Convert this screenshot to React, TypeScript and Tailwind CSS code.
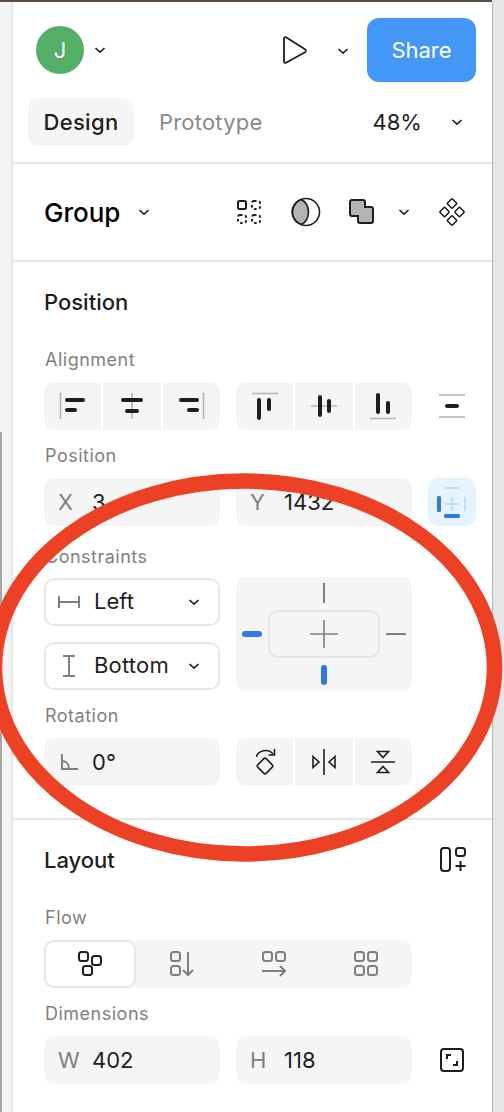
import type { ReactNode } from "react";

function Chevron({ className = "" }: { className?: string }) {
  return (
    <svg width="12" height="12" viewBox="0 0 12 12" fill="none" className={`shrink-0 ${className}`}>
      <path d="M1.5 4 6 8.2 10.5 4" stroke="#1e1e1e" strokeWidth="1.6" />
    </svg>
  );
}

function Icon({ children, size = 28 }: { children: ReactNode; size?: number }) {
  return (
    <svg width={size} height={size} viewBox={`0 0 ${size} ${size}`} fill="none" stroke="#1e1e1e" strokeWidth="1.6">
      {children}
    </svg>
  );
}

function Cell({ label, value }: { label: ReactNode; value: string }) {
  return (
    <div className="flex h-12 w-[176px] items-center rounded-[10px] bg-[#f5f5f5]">
      <span className="w-12 pl-[14px] text-[22px] text-[#7f7f7f]">{label}</span>
      <span className="text-[22px] text-[#1e1e1e]">{value}</span>
    </div>
  );
}

function Segments({ items }: { items: ReactNode[] }) {
  return (
    <div className="flex h-12 w-[176px] gap-[2px] overflow-hidden rounded-[10px]">
      {items.map((it, i) => (
        <div key={i} className="flex flex-1 items-center justify-center bg-[#f5f5f5]">
          {it}
        </div>
      ))}
    </div>
  );
}

function Label({ children, className = "" }: { children: ReactNode; className?: string }) {
  return <div className={`ml-[1px] text-[18px] leading-6 tracking-[0.5px] text-[#808080] ${className}`}>{children}</div>;
}

const GRAY = "#b3b3b3";
const BAR = "#1e1e1e";

const alignH = [
  <Icon key="l">
    <path d="M1.5 1v26" stroke={GRAY} />
    <rect x="6" y="6" width="20" height="4" rx="2" fill={BAR} stroke="none" />
    <rect x="6" y="16" width="12" height="4" rx="2" fill={BAR} stroke="none" />
  </Icon>,
  <Icon key="c">
    <path d="M14 1v26" stroke={GRAY} />
    <rect x="3" y="6" width="22" height="4" rx="2" fill={BAR} stroke="none" />
    <rect x="7" y="17" width="14" height="4" rx="2" fill={BAR} stroke="none" />
  </Icon>,
  <Icon key="r">
    <path d="M26.500 1v26" stroke={GRAY} />
    <rect x="2" y="6" width="20" height="4" rx="2" fill={BAR} stroke="none" />
    <rect x="10" y="16" width="12" height="4" rx="2" fill={BAR} stroke="none" />
  </Icon>,
];

const alignV = [
  <Icon key="t">
    <path d="M1 1.500h26" stroke={GRAY} />
    <rect x="6" y="6" width="4" height="22" rx="2" fill={BAR} stroke="none" />
    <rect x="16" y="6" width="4" height="13" rx="2" fill={BAR} stroke="none" />
  </Icon>,
  <Icon key="m">
    <path d="M1 14h26" stroke={GRAY} />
    <rect x="8" y="3" width="4" height="22" rx="2" fill={BAR} stroke="none" />
    <rect x="17" y="7" width="4" height="14" rx="2" fill={BAR} stroke="none" />
  </Icon>,
  <Icon key="b">
    <path d="M1 26.500h26" stroke={GRAY} />
    <rect x="7" y="1" width="4" height="21" rx="2" fill={BAR} stroke="none" />
    <rect x="17" y="9" width="4" height="13" rx="2" fill={BAR} stroke="none" />
  </Icon>,
];

const rotateIcons = [
  <Icon key="rot" size={30}>
    <rect x="9" y="13" width="12" height="12" rx="2" transform="rotate(45 15 19)" />
    <path d="M6.500 10c1-6.500 12-9 16.500-3" />
    <path d="M24.500 2v6h-6" />
  </Icon>,
  <Icon key="fh">
    <path d="M14 1v26" />
    <path d="M3 8.500v11l6-5.500z" />
    <path d="M25 8.500v11l-6-5.500z" />
  </Icon>,
  <Icon key="fv">
    <path d="M2 14h24" />
    <path d="M8.500 3.500h11l-5.500 6z" />
    <path d="M8.500 24.500h11l-5.500-6z" />
  </Icon>,
];

function Tile({ x, y }: { x: number; y: number }) {
  return <rect x={x} y={y} width="9" height="9" rx="2.500" />;
}

function FlowTab({ active, children }: { active?: boolean; children: ReactNode }) {
  return (
    <div
      className={`flex h-12 w-[92px] items-center justify-center rounded-[10px] ${
        active ? "border-2 border-[#e6e6e6] bg-white" : ""
      }`}
    >
      {children}
    </div>
  );
}

export default function App() {
  return (
    <div className="relative h-[1112px] w-[504px] overflow-hidden bg-[#f5f5f5] font-['Inter',sans-serif]">
      <div className="h-[2px] w-[492px] bg-[#5c4c41]" />
      {/* canvas scrollbar sliver on the far left, window shadow on the right */}
      <div className="absolute bottom-0 left-0 top-[432px] w-[2px] bg-[#a8a8a8]" />
      <div className="absolute bottom-0 right-0 top-0 w-[11px] bg-[#e6e6e6]" />

      <div className="ml-[11px] flex h-[1110px] w-[482px] flex-col border-l-2 border-r border-l-[#e6e6e6] border-r-[#b5b5b5] bg-white">
        {/* top bar */}
        <header className="h-[162px] shrink-0 border-b-2 border-[#e6e6e6] bg-white">
          <div className="flex h-[80px] items-start pt-[16px]">
            <div className="ml-[23px] mt-[8px] flex h-12 w-12 items-center justify-center rounded-full bg-[#53ae67] text-[22px] text-white">
              J
            </div>
            <Chevron className="ml-[10px] mt-[26px]" />
            <svg width="26" height="30" viewBox="0 0 26 30" fill="none" className="ml-[176px] mt-[17px]">
              <path
                d="M2 3.500v23c0 1.200 1 1.800 2 1.200l19-10.500c1.200-.7 1.200-2.200 0-2.900L4 2.300c-1-.6-2 0-2 1.200z"
                stroke="#1e1e1e"
                strokeWidth="1.800"
              />
            </svg>
            <Chevron className="ml-[29px] mt-[27px]" />
            <button className="ml-[18px] h-16 w-[109px] rounded-[12px] bg-[#4597f7] text-[22px] text-white">
              Share
            </button>
          </div>
          <div className="mt-[16px] flex h-12 items-center">
            <div className="ml-[15px] flex h-12 w-[106px] items-center justify-center rounded-[10px] bg-[#f5f5f5] text-[22px] font-medium tracking-[0.3px] text-[#1e1e1e]">
              Design
            </div>
            <span className="ml-[25px] text-[22px] tracking-[0.2px] text-[#8a8a8a]">Prototype</span>
            <span className="ml-[110px] text-[22px] text-[#1e1e1e]">48%</span>
            <Chevron className="ml-[29px]" />
          </div>
        </header>

        {/* selection row */}
        <section className="flex h-[98px] shrink-0 items-center border-b-2 border-[#e6e6e6]">
          <span className="ml-[31px] text-[26px] font-medium text-black">Group</span>
          <Chevron className="ml-[18px]" />
          <div className="ml-[85px]">
            <Icon>
              <rect x="3" y="3" width="8" height="8" rx="1.500" strokeWidth="2" />
              <rect x="17" y="3" width="8" height="8" rx="2" strokeDasharray="2.500 2.500" strokeWidth="2" />
              <rect x="3" y="17" width="8" height="8" rx="2" strokeDasharray="2.500 2.500" strokeWidth="2" />
              <rect x="17" y="17" width="8" height="8" rx="2" strokeDasharray="2.500 2.500" strokeWidth="2" />
            </Icon>
          </div>
          <div className="ml-[28px]">
            <svg width="30" height="30" viewBox="0 0 30 30" fill="none" stroke="#1e1e1e" strokeWidth="1.600">
              <path d="M10.500 2.500a13 13 0 0 0 0 25c4.500-2.500 7-7.500 7-12.500s-2.500-10-7-12.500z" fill="#b3b3b3" />
              <circle cx="15" cy="15" r="13.500" />
            </svg>
          </div>
          <div className="ml-[28px]">
            <svg width="26" height="26" viewBox="0 0 26 26" fill="#b3b3b3" stroke="#1e1e1e" strokeWidth="2">
              <path d="M3 1h11c1 0 2 1 2 2v5h6c1 0 2 1 2 2v12c0 1-1 2-2 2H11c-1 0-2-1-2-2v-5H3c-1 0-2-1-2-2V3c0-1 1-2 2-2z" />
            </svg>
          </div>
          <Chevron className="ml-[23px]" />
          <div className="ml-[28px]">
            <Icon>
              <rect x="10.500" y="2" width="7" height="7" rx="1" transform="rotate(45 14 5.500)" />
              <rect x="3" y="10.500" width="7" height="7" rx="1" transform="rotate(45 6.500 14)" />
              <rect x="18" y="10.500" width="7" height="7" rx="1" transform="rotate(45 21.500 14)" />
              <rect x="10.500" y="19" width="7" height="7" rx="1" transform="rotate(45 14 22.500)" />
            </Icon>
          </div>
        </section>

        {/* position */}
        <section className="h-[558px] shrink-0 border-b-2 border-[#e6e6e6] pl-[31px]">
          <h2 className="mt-[28px] text-[22px] font-medium leading-6 text-[#1e1e1e]">Position</h2>
          <Label className="mt-[34px]">Alignment</Label>
          <div className="mt-[10px] flex items-center gap-4">
            <Segments items={alignH} />
            <Segments items={alignV} />
            <div className="ml-[10px]">
              <Icon>
                <path d="M1 3h26M1 25h26" stroke={GRAY} />
                <rect x="7" y="12" width="14" height="4" rx="2" fill={BAR} stroke="none" />
              </Icon>
            </div>
          </div>
          <Label className="mt-[14px]">Position</Label>
          <div className="mt-[10px] flex gap-4">
            <Cell label="X" value="3" />
            <Cell label="Y" value="1432" />
            <div className="flex h-12 w-12 items-center justify-center rounded-[10px] bg-[#e5f3ff]">
              <svg width="32" height="32" viewBox="0 0 32 32" fill="none">
                <path d="M9 2h14M29 11v14M16 11v14M9 18h14" stroke="#bddcfb" strokeWidth="2" />
                <rect x="1" y="10" width="4" height="16" rx="1.500" fill="#3178e0" />
                <rect x="8" y="28" width="16" height="4" rx="1.500" fill="#3178e0" />
              </svg>
            </div>
          </div>
          <Label className="mt-[19px]">Constraints</Label>
          <div className="mt-[8px] flex gap-4">
            <div className="flex w-[176px] flex-col gap-4 pt-[1px]">
              <div className="flex h-12 items-center rounded-[10px] border-2 border-[#e6e6e6] bg-white">
                <svg width="22" height="14" viewBox="0 0 22 14" fill="none" className="ml-[12px]" stroke="#7f7f7f" strokeWidth="2">
                  <path d="M1 1v12M21 1v12M1 7h20" />
                </svg>
                <span className="mb-[2px] ml-[14px] text-[22px] text-[#1e1e1e]">Left</span>
                <Chevron className="ml-auto mr-[18px]" />
              </div>
              <div className="flex h-12 items-center rounded-[10px] border-2 border-[#e6e6e6] bg-white">
                <svg width="12" height="22" viewBox="0 0 12 22" fill="none" className="ml-[17px]" stroke="#7f7f7f" strokeWidth="2">
                  <path d="M0 1h12M0 21h12M6 1v20" />
                </svg>
                <span className="mb-[2px] ml-[19px] text-[22px] tracking-[0.2px] text-[#1e1e1e]">Bottom</span>
                <Chevron className="ml-auto mr-[18px]" />
              </div>
            </div>
            <div className="relative h-[114px] w-[176px] rounded-[10px] bg-[#f5f5f5]">
              <div className="absolute left-[32px] top-[33px] flex h-12 w-[112px] items-center justify-center rounded-[10px] border-2 border-[#e6e6e6]">
                <svg width="28" height="28" viewBox="0 0 28 28" stroke="#7f7f7f" strokeWidth="1.600">
                  <path d="M14 0v28M0 14h28" />
                </svg>
              </div>
              <div className="absolute left-[87px] top-[6px] h-5 w-[2px] bg-[#7f7f7f]" />
              <div className="absolute left-[150px] top-[56px] h-[2px] w-5 bg-[#7f7f7f]" />
              <div className="absolute left-[6px] top-[54px] h-[6px] w-5 rounded-full bg-[#3178e0]" />
              <div className="absolute left-[85px] top-[88px] h-5 w-[6px] rounded-full bg-[#3178e0]" />
            </div>
          </div>
          <Label className="mt-[13px]">Rotation</Label>
          <div className="mt-[10px] flex gap-4">
            <Cell
              label={
                <svg width="18" height="16" viewBox="0 0 18 16" fill="none" stroke="#7f7f7f" strokeWidth="2" className="ml-[2px]">
                  <path d="M2 0v15h16M2 7c4 0 7 3 7 8" />
                </svg>
              }
              value="0°"
            />
            <Segments items={rotateIcons} />
          </div>
        </section>

        {/* layout */}
        <section className="relative flex-1 pl-[31px]">
          <div className="mt-[28px] flex h-6 items-center justify-between">
            <h2 className="text-[22px] font-medium leading-6 text-[#1e1e1e]">Layout</h2>
            <div className="mr-[25px]">
              <Icon>
                <rect x="2" y="2" width="9" height="23" rx="3" strokeWidth="2" />
                <rect x="17" y="2" width="9" height="8" rx="2.500" strokeWidth="2" />
                <path d="M21.500 15v10M16.500 20h10" strokeWidth="2" />
              </Icon>
            </div>
          </div>
          <Label className="mt-[34px]">Flow</Label>
          <div className="mt-[10px] flex w-[368px] rounded-[10px] bg-[#f5f5f5]">
            <FlowTab active>
              <svg width="26" height="26" viewBox="0 0 26 26" fill="none" stroke="#1e1e1e" strokeWidth="2">
                <Tile x={2} y={1} />
                <Tile x={15} y={5} />
                <Tile x={6} y={15} />
              </svg>
            </FlowTab>
            <FlowTab>
              <svg width="26" height="26" viewBox="0 0 26 26" fill="none" stroke="#7f7f7f" strokeWidth="2">
                <Tile x={2} y={1} />
                <Tile x={2} y={15} />
                <path d="M19 1v23M14 19l5 5 5-5" />
              </svg>
            </FlowTab>
            <FlowTab>
              <svg width="26" height="26" viewBox="0 0 26 26" fill="none" stroke="#7f7f7f" strokeWidth="2">
                <Tile x={2} y={1} />
                <Tile x={15} y={1} />
                <path d="M1 20h23M19 15l5 5-5 5" />
              </svg>
            </FlowTab>
            <FlowTab>
              <svg width="26" height="26" viewBox="0 0 26 26" fill="none" stroke="#7f7f7f" strokeWidth="2">
                <Tile x={2} y={1} />
                <Tile x={15} y={1} />
                <Tile x={2} y={15} />
                <Tile x={15} y={15} />
              </svg>
            </FlowTab>
          </div>
          <Label className="mt-[14px]">Dimensions</Label>
          <div className="mt-[10px] flex gap-4">
            <Cell label="W" value="402" />
            <Cell label="H" value="118" />
            <div className="flex h-12 w-12 items-center justify-center">
              <svg width="24" height="24" viewBox="0 0 24 24" fill="none" stroke="#1e1e1e" strokeWidth="2">
                <rect x="1" y="1" width="22" height="22" rx="3" />
                <path d="M7 11V7h4M17 13v4h-4" />
              </svg>
            </div>
          </div>
        </section>
      </div>

      {/* hand-drawn annotation over the panel */}
      <svg width="504" height="1112" className="pointer-events-none absolute left-0 top-0" fill="none">
        <ellipse cx="244.500" cy="667.500" rx="250" ry="186.500" stroke="#ec4125" strokeWidth="15.500" />
      </svg>
    </div>
  );
}
